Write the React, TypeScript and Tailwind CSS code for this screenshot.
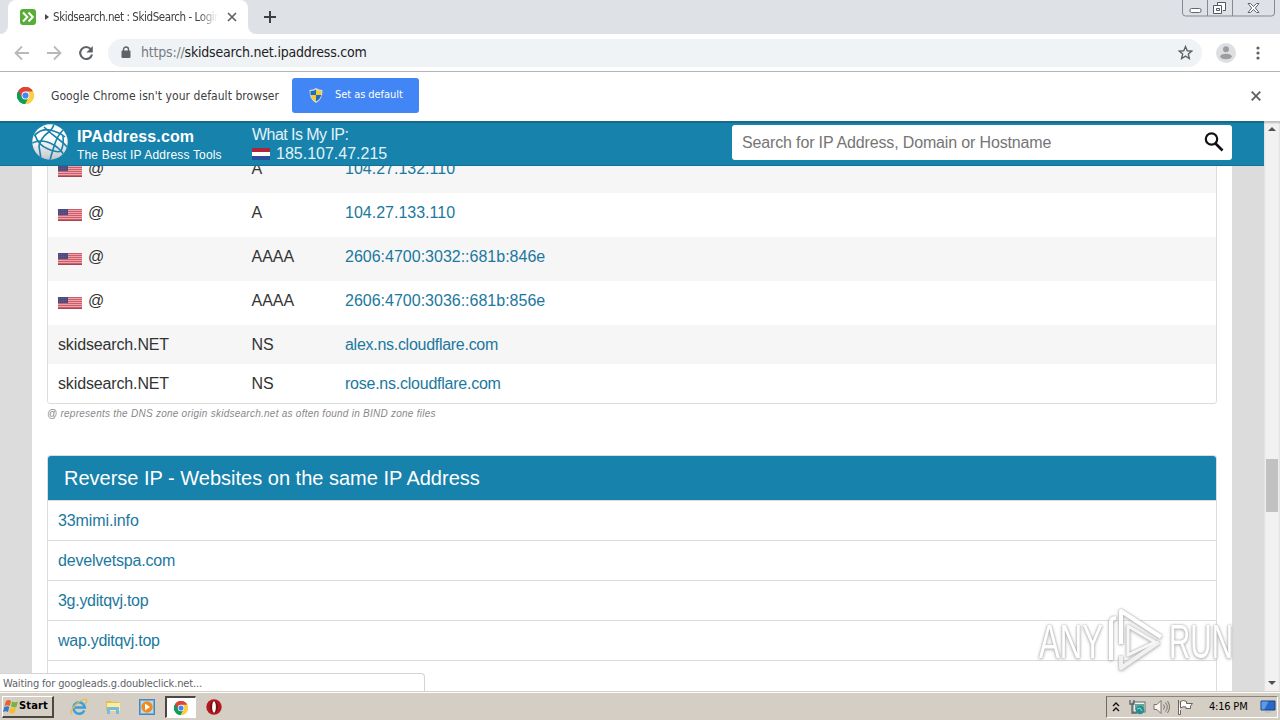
import type { ReactNode } from "react";

const UI = "font-['DejaVu_Sans_Condensed','DejaVu_Sans',sans-serif] [font-stretch:condensed]";

const RECORDS = [
  { name: "@", flag: true, type: "A", value: "104.27.132.110", tracking: "" },
  { name: "@", flag: true, type: "A", value: "104.27.133.110", tracking: "" },
  { name: "@", flag: true, type: "AAAA", value: "2606:4700:3032::681b:846e", tracking: "" },
  { name: "@", flag: true, type: "AAAA", value: "2606:4700:3036::681b:856e", tracking: "" },
  { name: "skidsearch.NET", flag: false, type: "NS", value: "alex.ns.cloudflare.com", tracking: "tracking-[-0.28px]" },
  { name: "skidsearch.NET", flag: false, type: "NS", value: "rose.ns.cloudflare.com", tracking: "tracking-[-0.24px]" },
];

const SITES = [
  { host: "33mimi.info", tracking: "tracking-[-0.1px]" },
  { host: "develvetspa.com", tracking: "tracking-[-0.2px]" },
  { host: "3g.yditqvj.top", tracking: "tracking-[-0.28px]" },
  { host: "wap.yditqvj.top", tracking: "tracking-[-0.28px]" },
  { host: "", tracking: "" },
];

function ChromeLogo({ size }: { size: number }) {
  return (
    <svg width={size} height={size} viewBox="0 0 48 48" className="shrink-0">
      <path d="M24 24 3.2 12A24 24 0 0 1 44.8 12Z" fill="#db4437" />
      <path d="M24 24V48A24 24 0 0 1 3.2 12Z" fill="#0f9d58" />
      <path d="M24 24 44.8 12A24 24 0 0 1 24 48Z" fill="#ffcd40" />
      <path d="M24 13H45.3L44.8 12A24 24 0 0 0 3.2 12L14.5 29.5Z" fill="#db4437" />
      <path d="M33.5 29.5 24 48 21 47.8A24 24 0 0 1 3.2 12L14.5 29.5Z" fill="#0f9d58" />
      <path d="M24 13H45.3A24 24 0 0 1 23 48L33.5 29.5Z" fill="#ffcd40" />
      <circle cx="24" cy="24" r="11" fill="#fff" />
      <circle cx="24" cy="24" r="8.7" fill="#4285f4" />
    </svg>
  );
}

function UsFlag() {
  return (
    <svg width="24" height="12" viewBox="0 0 24 12" className="mt-[5px] shrink-0">
      <rect width="24" height="12" fill="#eba3aa" />
      {[0, 2, 4, 6, 8, 10].map(y => (
        <rect key={y} y={y} width="24" height="1" fill="#cf5c6a" />
      ))}
      <rect y="11" width="24" height="1" fill="#a94350" />
      <rect width="10" height="6" fill="#4c4b80" />
      <path d="M1 1.5h8M1 3.5h8M1 5.2h8" stroke="#68669a" strokeWidth=".6" strokeDasharray="1 1" />
    </svg>
  );
}

function Globe() {
  return (
    <svg width="36" height="36" viewBox="0 0 36 36" className="shrink-0">
      <defs>
        <linearGradient id="globe" x1="0" y1="0" x2="0" y2="1">
          <stop offset=".4" stopColor="#fff" />
          <stop offset="1" stopColor="#c3c5ca" />
        </linearGradient>
        <clipPath id="globe-clip"><circle cx="18" cy="18" r="17.7" /></clipPath>
      </defs>
      <circle cx="18" cy="18" r="17.7" fill="url(#globe)" />
      <g clipPath="url(#globe-clip)" fill="none" stroke="#1782ac" strokeWidth="1.6">
        <path d="M2 12Q9 4 18 6T33 13" />
        <path d="M22 0Q21 5 15 9.500T7 22L9 35" />
        <path d="M0 19Q9 15 18 19T32 31" />
        <path d="M12 3Q18 9 25 14T36 24" />
        <path d="M32 5Q26 11 23.500 18T18 36" />
        <path d="M3 11Q6 21 16 25T29 27Q32 21 31 12" />
      </g>
    </svg>
  );
}

function TabStrip() {
  return (
    <div className="relative flex h-[34px] shrink-0 bg-[#dee1e6] pl-2">
      <div className="relative flex w-[240px] items-center rounded-t-lg bg-white pl-3">
        <svg width="8" height="8" className="absolute bottom-0 -left-2"><path d="M8 0v8H0A8 8 0 0 0 8 0" fill="#fff" /></svg>
        <svg width="8" height="8" className="absolute -right-2 bottom-0"><path d="M0 0v8h8A8 8 0 0 1 0 0" fill="#fff" /></svg>
        <svg width="16" height="16" viewBox="0 0 16 16" className="shrink-0">
          <rect width="16" height="16" rx="3" fill="#58ad37" />
          <path d="m3 3.5 4.3 4.5L3 12.5M8.5 3.5 12.800 8l-4.300 4.500" fill="none" stroke="#fff" strokeWidth="2" />
        </svg>
        <svg width="4" height="6" className="ml-[9px] shrink-0"><path d="M0 0 4 3 0 6Z" fill="#454749" /></svg>
        <div className={`${UI} ml-[4px] w-[165px] overflow-hidden pt-[2px] text-[11.5px] tracking-[-0.43px] whitespace-nowrap text-[#3c4043] [mask-image:linear-gradient(to_right,black_88%,transparent)]`}>
          Skidsearch.net : SkidSearch - Login
        </div>
        <svg width="10" height="10" className="ml-[9px] shrink-0"><path d="m1 1 8 8M9 1 1 9" stroke="#5f6368" strokeWidth="1.7" /></svg>
      </div>
      <svg width="12" height="12" className="mt-[11px] ml-4"><path d="M6 0v12M0 6h12" stroke="#3c4043" strokeWidth="2" /></svg>
      <svg width="94" height="17" viewBox="0 0 94 17" className="mr-[4px] ml-auto" fill="none">
        <path d="M.5 0v13q0 3 3 3h86q3 0 3-3V0M25.500 0v16M50.500 0v16" stroke="#858994" />
        <rect x="8" y="8.500" width="11" height="4" rx="1.500" fill="#fff" stroke="#63666f" />
        <path d="M35.500 5V2.500h8v8H41M31.500 5.500h8v8h-8zM34.500 8.500h3v2h-3z" stroke="#555861" fill="#fff" />
        <path d="m66 3.500 2.500 0 3 3 3-3H77l-3.700 4.500L77 12.500h-2.500l-3-3-3 3H66L69.700 8Z" fill="#fff" stroke="#63666f" />
      </svg>
    </div>
  );
}

function Toolbar() {
  return (
    <div className="flex h-[38px] shrink-0 items-center border-b border-[#b3b5b5] bg-white">
      <svg width="92" height="18" viewBox="0 0 92 18" className="ml-2 shrink-0" fill="none">
        <path d="M21 9H8M14 2.500 7.500 9l6.500 6.500M39 9h13M46 2.500 52.500 9 46 15.500" stroke="#b7b9bc" strokeWidth="1.800" />
        <path d="M82.800 5.200A6 6 0 1 0 84 10.500" stroke="#5f6368" strokeWidth="2.100" />
        <path d="M84.800 2v6.500H78.300Z" fill="#5f6368" />
      </svg>
      <div className="ml-2 flex h-7 w-[1094px] items-center rounded-full bg-[#f0f3f5] pl-[13px]">
        <svg width="10" height="13" viewBox="0 0 10 13" className="shrink-0">
          <path d="M2.500 5V3.500a2.500 2.500 0 0 1 5 0V5" fill="none" stroke="#5f6368" strokeWidth="1.400" />
          <rect x=".5" y="4.500" width="9" height="7.500" rx="1" fill="#5f6368" />
        </svg>
        <div className={`${UI} ml-[10px] text-[14px] tracking-[-0.2px] whitespace-nowrap text-[#202124]`}>
          <span className="text-[#777c82]">https://</span>skidsearch.net.ipaddress.com
        </div>
        <svg width="15" height="15" viewBox="0 0 24 24" className="mr-[9px] ml-auto">
          <path d="m12 2.500 2.800 6.700 7.200.6-5.500 4.700 1.700 7.100L12 17.800l-6.200 3.800 1.700-7.100L2 9.800l7.200-.6Z" fill="none" stroke="#5f6368" strokeWidth="2.200" />
        </svg>
      </div>
      <svg width="20" height="20" viewBox="0 0 20 20" className="ml-[14px]">
        <circle cx="10" cy="10" r="10" fill="#dedfe0" />
        <circle cx="10" cy="6.300" r="3" fill="#9b9da0" />
        <ellipse cx="10" cy="13.500" rx="5.800" ry="2.800" fill="#9b9da0" />
      </svg>
      <svg width="4" height="14" className="ml-5" fill="#5f6368">
        <circle cx="2" cy="2" r="1.600" /><circle cx="2" cy="7" r="1.600" /><circle cx="2" cy="12" r="1.600" />
      </svg>
    </div>
  );
}

function InfoBar() {
  return (
    <div className="flex h-[49px] shrink-0 items-center bg-white pb-[2px] pl-[17px]">
      <ChromeLogo size={17} />
      <div className={`${UI} ml-[17px] w-[229px] text-[12px] tracking-[0.06px] whitespace-nowrap text-[#3c4043]`}>
        Google Chrome isn't your default browser
      </div>
      <div className="ml-3 flex h-[35px] w-[127px] items-center rounded-[3px] bg-[#4285f4] pl-[17px]">
        <svg width="14" height="15" viewBox="0 0 14 15">
          <path d="M7 0Q10 2 13.500 2 14 11 7 15 0 11 .5 2 4 2 7 0" fill="#d7dadd" />
          <path d="M7 1.500V7H1.500V3Q5 3 7 1.500M7 7h5.300Q11 11.500 7 13.500Z" fill="#2469c3" />
          <path d="M7 1.500Q9 3 12.500 3V7H7ZM7 7v6.500Q3 11.500 1.700 7Z" fill="#f4cd2a" />
        </svg>
        <span className={`${UI} ml-[12px] text-[11px] tracking-[-0.06px] whitespace-nowrap text-white`}>Set as default</span>
      </div>
      <svg width="10" height="10" className="mr-[19px] ml-auto"><path d="m.7.7 8.600 8.600M9.300.7.7 9.300" stroke="#5f6368" strokeWidth="1.900" /></svg>
    </div>
  );
}

function SiteHeader() {
  return (
    <header className="flex h-[45px] shrink-0 border-t-2 border-b border-t-[#146a8b] border-b-[#146f93] bg-[#1782ac] pl-8 text-white">
      <div className="mt-[1px]"><Globe /></div>
      <div className="ml-[9px] w-[175px] whitespace-nowrap">
        <div className="mt-[2px] text-[16px] leading-[23px] font-bold tracking-[0.15px]">IPAddress.com</div>
        <div className="text-[12px] leading-[15px] tracking-[0.18px]">The Best IP Address Tools</div>
      </div>
      <div className="w-[480px] text-[16px] whitespace-nowrap text-[#e4f2f7]">
        <div className="mt-[2px] leading-[20px] tracking-[-0.55px]">What Is My IP:</div>
        <div className="flex items-center leading-[18px]">
          <svg width="18" height="12" className="mr-[6px]">
            <rect width="18" height="4" fill="#ae2638" /><rect y="4" width="18" height="4" fill="#fff" /><rect y="8" width="18" height="4" fill="#28509b" />
          </svg>
          185.107.47.215
        </div>
      </div>
      <div className="mt-[2px] flex h-[35px] w-[500px] items-center rounded-[3px] bg-white pr-2 pl-[10px] text-[16px] text-[#757575]">
        <span className="tracking-[-0.15px]">Search for IP Address, Domain or Hostname</span>
        <svg width="20" height="20" viewBox="0 0 20 20" className="mb-[1px] ml-auto" fill="none" stroke="#111">
          <circle cx="7.500" cy="7" r="5.700" strokeWidth="2.200" /><path d="m11.500 11.500 7 7" strokeWidth="2.700" />
        </svg>
      </div>
    </header>
  );
}

function Content() {
  return (
    <main className="h-[526px] overflow-hidden bg-[#dcdcdc] px-8">
      <div className="h-full bg-white pr-[15px] pl-[15px] text-[16px]">
        <div className="flex h-[238px] flex-col justify-end overflow-hidden rounded-b border border-t-0 border-[#dcdcdc]">
          {RECORDS.map((r, i) => (
            <div
              key={i}
              className={`flex shrink-0 pl-[10px] leading-[39px] ${r.flag ? "h-[44px]" : "h-[39px]"} ${i % 2 ? "bg-white" : "bg-[#f6f6f6]"}`}
            >
              <div className="flex w-[193.500px] items-center text-[#333]">
                {r.flag ? (
                  <div className="flex h-[44px]">
                    <div className="mr-[6px] pt-[11px]"><UsFlag /></div>
                    {r.name}
                  </div>
                ) : <span className="tracking-[-0.14px]">{r.name}</span>}
              </div>
              <div className="w-[93.500px] text-[#333]">{r.type}</div>
              <a className={`text-[#1b789e] ${r.tracking}`}>{r.value}</a>
            </div>
          ))}
        </div>
        <p className="h-[51px] pt-[2px] text-[10px] leading-[16px] tracking-[0.255px] text-[#888] italic">
          @ represents the DNS zone origin skidsearch.net as often found in BIND zone files
        </p>
        <section className="overflow-hidden rounded-t border border-b-0 border-[#dcdcdc]">
          <h2 className="h-[45px] border-b border-[#dcdcdc] bg-[#1782ac] pl-4 text-[20px] leading-[44px] text-white">
            Reverse IP - Websites on the same IP Address
          </h2>
          {SITES.map((site, i) => (
            <div key={i} className={`h-10 border-b border-[#dcdcdc] pl-[10px] leading-[39px] text-[#1b789e] ${site.tracking}`}>
              {site.host}
            </div>
          ))}
        </section>
      </div>
    </main>
  );
}

function Scrollbar() {
  return (
    <div className="flex w-4 flex-col items-center bg-[#f1f1f1] shadow-[inset_0_2px_2px_#bbb]">
      <svg width="8" height="4" className="mt-[6px]"><path d="M0 4 4 0l4 4Z" fill="#505050" /></svg>
      <div className="mt-[328px] h-[53px] w-3 bg-[#c1c1c1]" />
      <svg width="8" height="4" className="mt-auto mb-[6px]"><path d="m0 0 4 4 4-4Z" fill="#505050" /></svg>
    </div>
  );
}

function Watermark() {
  return (
    <svg
      width="206"
      height="72"
      viewBox="0 0 206 72"
      className="absolute top-[483px] left-[1032px] opacity-80 [filter:drop-shadow(0_0_1px_#9a9a9a)_drop-shadow(0_1px_1.5px_#b5b5b5)]"
    >
      <g fill="#fff" fontSize="48" fontFamily="'Liberation Sans Narrow','Liberation Sans',sans-serif">
        <text x="7" y="54" textLength="64" lengthAdjust="spacingAndGlyphs">ANY</text>
        <text x="137" y="54" textLength="64" lengthAdjust="spacingAndGlyphs">RUN</text>
      </g>
      <g fill="none" strokeLinejoin="round" strokeWidth="4">
        <path d="M79 56V18q0-4 5-4M89 40V7l40 26" stroke="#fff" />
        <path d="m127 38-38 26V52" stroke="#eee" />
        <path d="M96 51V22l27 16Z" stroke="#f6f6f6" strokeWidth="3" />
      </g>
    </svg>
  );
}

function TaskButton({ children }: { children: ReactNode }) {
  return <div className="flex w-[34px] items-center justify-center">{children}</div>;
}

function Taskbar() {
  return (
    <div className="flex h-[29px] shrink-0 border-t border-[#d5d1c9] bg-[#d5cec5] pt-[4px] pl-[2px] shadow-[inset_0_1px_0_#fff]">
      <div className={`${UI} flex h-[22px] w-[52px] items-center border-t border-r-2 border-b-2 border-l border-t-white border-r-[#4b4843] border-b-[#4b4843] border-l-white text-[11px] font-bold text-black`}>
        <svg width="16" height="16" viewBox="0 0 16 16" className="shrink-0">
          <path d="M3 2q3-2 5 0L6.800 7Q4 5.500 1.500 7Z" fill="#e8622b" />
          <path d="M9 2.500q3 1.500 6 0L13.500 8Q11 9 8 7.500Z" fill="#78b63b" />
          <path d="M1.300 8q3-1.500 5 0L5 13q-2.500-1.500-5 0Z" fill="#3778c8" />
          <path d="M7.500 8.500q3 1.500 5.500.5l-1.500 5q-3 1-5.500-.5Z" fill="#f5bd28" />
        </svg>
        <span className="tracking-[0.15px]">Start</span>
      </div>
      <div className="ml-[8px] flex h-[22px]">
        <TaskButton>
          <svg width="18" height="18" viewBox="0 0 18 18" fill="none">
            <path d="M14.300 12.500A5.700 5.700 0 1 1 14.800 9.500H5" stroke="#3b9fdb" strokeWidth="2.500" />
            <path d="M2 16Q-1 14 5 7.500T16 1.500q2 1-1 5" stroke="#e3bd4f" strokeWidth="1.300" />
          </svg>
        </TaskButton>
        <TaskButton>
          <svg width="16" height="16" viewBox="0 0 16 16">
            <path d="M1 2h5l1 1h7v9H1Z" fill="#e5bd51" /><path d="M2 4h13v8H2Z" fill="#faed9c" />
            <path d="M2 15V9q0-1 1-1h10q1 0 1 1v6h-3v-4H5v4Z" fill="#74bce2" />
          </svg>
        </TaskButton>
        <TaskButton>
          <svg width="16" height="16" viewBox="0 0 16 16">
            <rect x=".5" y=".5" width="15" height="15" fill="#74addb" stroke="#4986bc" /><rect x="2" y="2" width="12" height="12" fill="#b9dcf2" />
            <circle cx="8" cy="8" r="5.700" fill="#f28a1b" /><path d="m6 4.500 5 3.500-5 3.500Z" fill="#fff" />
          </svg>
        </TaskButton>
        <div className="mx-[1px] flex h-[22px] w-[31px] items-center justify-center border-t-2 border-r border-b border-l-2 border-t-[#4b4843] border-r-white border-b-white border-l-[#4b4843] bg-white">
          <ChromeLogo size={14} />
        </div>
        <TaskButton>
          <svg width="16" height="16" viewBox="0 0 16 16">
            <circle cx="8" cy="8" r="7.700" fill="#b4171d" /><ellipse cx="8" cy="8" rx="4" ry="6" fill="#771013" /><ellipse cx="8" cy="8" rx="1.900" ry="5.700" fill="#fff" />
          </svg>
        </TaskButton>
      </div>
      <div className="mr-[2px] ml-auto flex h-[22px] w-[172px] items-center border border-t-[#8b867d] border-r-white border-b-white border-l-[#6f6b64]">
        <svg width="8" height="10" className="ml-[5px]" fill="none" stroke="#111" strokeWidth="1.400"><path d="m1 4 3-3 3 3M1 9l3-3 3 3" /></svg>
        <svg width="17" height="16" viewBox="0 0 17 16" className="ml-[9px]">
          <rect x="4" y="3" width="12" height="10" fill="#eef4ef" stroke="#58706b" /><rect x="6" y="5" width="9" height="6" fill="#63a5a0" />
          <path d="M1 1v4h4V1M3 5v9h5" stroke="#5e6362" strokeWidth="1.300" fill="none" /><circle cx="11" cy="11" r="4.300" fill="#268f91" /><path d="m8 10 3-1 2 3" stroke="#9edccc" fill="none" />
        </svg>
        <svg width="17" height="16" viewBox="0 0 17 16" className="ml-[7px]" fill="#f6f5f1" stroke="#77746e">
          <path d="M1 5.500h3L8 1.500v13l-4-4H1Z" /><path d="M10.500 5.500q2 2.500 0 5M12.500 3.500q3.500 4.500 0 9M14.500 2q4 6 0 12" fill="none" />
        </svg>
        <svg width="17" height="16" viewBox="0 0 17 16" className="ml-[7px]" fill="#fff" stroke="#67645f">
          <path d="M1.500 1v14.500h2V11M3.500 2.500q3-2 6 0v2h6l-2 2.500v2.500H9V8Q6 7 3.500 9Z" />
        </svg>
        <span className={`${UI} ml-[15px] w-[41px] text-[11px] tracking-[-0.2px] whitespace-nowrap text-black`}>4:16 PM</span>
        <svg width="16" height="14" viewBox="0 0 16 14" className="ml-[10px]">
          <path d="M1 1h14v9H1Z" fill="#2868c6" stroke="#183f81" /><path d="M1.500 1.500h7l-4 8h-3Z" fill="#5a9be6" /><path d="M5 11h6v2H5Z" fill="#b7c3d2" />
        </svg>
      </div>
    </div>
  );
}

export default function App() {
  return (
    <div className="flex h-[720px] w-[1280px] flex-col overflow-hidden bg-white font-['Liberation_Sans',Arial,sans-serif]">
      <TabStrip />
      <Toolbar />
      <InfoBar />
      <div className="relative flex h-[570px] shrink-0 overflow-hidden">
        <div className="flex w-[1264px] flex-col">
          <SiteHeader />
          <Content />
        </div>
        <Scrollbar />
        <Watermark />
        <div className={`${UI} absolute bottom-0 left-0 h-[18px] w-[425px] rounded-tr border-t border-r border-[#d4d4d4] bg-white pl-[3px] text-[11px] leading-[19px] tracking-[-0.15px] whitespace-nowrap text-[#5f6368]`}>
          Waiting for googleads.g.doubleclick.net...
        </div>
      </div>
      <Taskbar />
    </div>
  );
}
